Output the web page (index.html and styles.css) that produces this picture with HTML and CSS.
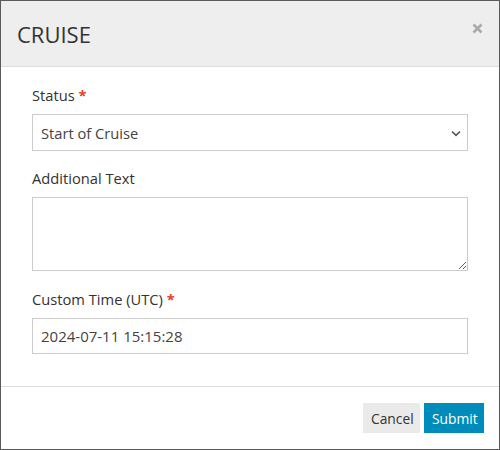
FILE: index.html
```html
<!DOCTYPE html>
<html>
<head>
<meta charset="utf-8">
<link rel="stylesheet" href="styles.css">
</head>
<body>
<div class="modal">
  <div class="modal-header">
    <h2 class="modal-title">CRUISE</h2>
    <span class="close" aria-label="Close">
      <svg width="11" height="11" viewBox="0 0 11 11"><path d="M1.5 1.5 L9.5 9.5 M9.5 1.5 L1.5 9.5" stroke="#aaa" stroke-width="2.6" stroke-linecap="butt" fill="none"/></svg>
    </span>
  </div>
  <div class="modal-body">
    <div class="form-group">
      <label class="label">Status <span class="req">*</span></label>
      <div class="select">
        <span>Start of Cruise</span>
        <svg class="chev" width="10" height="7" viewBox="0 0 10 7"><path d="M1 1.5 L5 5.3 L9 1.5" stroke="#555" stroke-width="1.6" fill="none"/></svg>
      </div>
    </div>
    <div class="form-group form-group-text">
      <label class="label">Additional Text</label>
      <textarea class="textarea"></textarea>
    </div>
    <div class="form-group">
      <label class="label">Custom Time (UTC) <span class="req">*</span></label>
      <input class="input" type="text" value="2024-07-11 15:15:28">
    </div>
  </div>
  <div class="modal-footer">
    <button class="btn btn-cancel">Cancel</button>
    <button class="btn btn-submit">Submit</button>
  </div>
</div>
</body>
</html>
```
FILE: styles.css
```css
* { box-sizing: border-box; }
html, body { margin: 0; padding: 0; background: #fff; }
body { font-family: "Open Sans", "Liberation Sans", sans-serif; color: #333; }

.modal {
  width: 500px;
  height: 450px;
  border: 1px solid #5a5a5a;
  background: #fff;
  display: flex;
  flex-direction: column;
}

.modal-header {
  height: 66px;
  flex: none;
  background: #eee;
  border-bottom: 1px solid #ddd;
  display: flex;
  align-items: center;
  justify-content: space-between;
  padding: 0 16px 0 16px;
}
.modal-title {
  margin: 0;
  font-size: 22px;
  font-weight: 400;
  line-height: 32px;
  color: #333;
}
.close {
  align-self: flex-start;
  margin-top: 22px;
  display: block;
  width: 11px;
  height: 11px;
}
.close svg { display: block; }

.modal-body {
  flex: none;
  padding: 18px 31px 14px 31px;
  border-bottom: 1px solid #ddd;
}
.form-group { margin-bottom: 17px; }
.form-group-text { margin-bottom: 18px; }
.form-group:last-child { margin-bottom: 18px; }
.label {
  display: block;
  font-size: 14.7px;
  line-height: 20px;
  margin-bottom: 9px;
  color: #333;
}
.req { color: #ee3a1f; font-weight: 700; }

.select {
  height: 37px;
  border: 1px solid #ccc;
  display: flex;
  align-items: center;
  justify-content: space-between;
  padding: 0 6px 0 8px;
  font-size: 14.7px;
  color: #444;
}
.chev { display: block; margin-top: 2px; }

.textarea {
  display: block;
  width: 100%;
  height: 74px;
  border: 1px solid #ccc;
  border-radius: 0;
  padding: 6px 8px;
  font-family: inherit;
  font-size: 15px;
  resize: vertical;
  margin: 0;
  outline: none;
}
.input {
  display: block;
  width: 100%;
  height: 36px;
  border: 1px solid #ccc;
  border-radius: 0;
  padding: 0 8px;
  font-family: inherit;
  font-size: 15px;
  color: #444;
  margin: 0;
  outline: none;
}

.modal-footer {
  flex: 1;
  display: flex;
  justify-content: flex-end;
  align-items: flex-start;
  gap: 4px;
  padding: 16px 15px 0 0;
}
.btn {
  height: 30px;
  border: none;
  border-radius: 0;
  font-family: inherit;
  font-size: 13.8px;
  padding: 0 8px;
  margin: 0;
  cursor: pointer;
}
.btn-cancel { background: #eaeaea; color: #333; width: 57px; }
.btn-submit { background: #008cba; color: #fff; width: 60px; }
```
